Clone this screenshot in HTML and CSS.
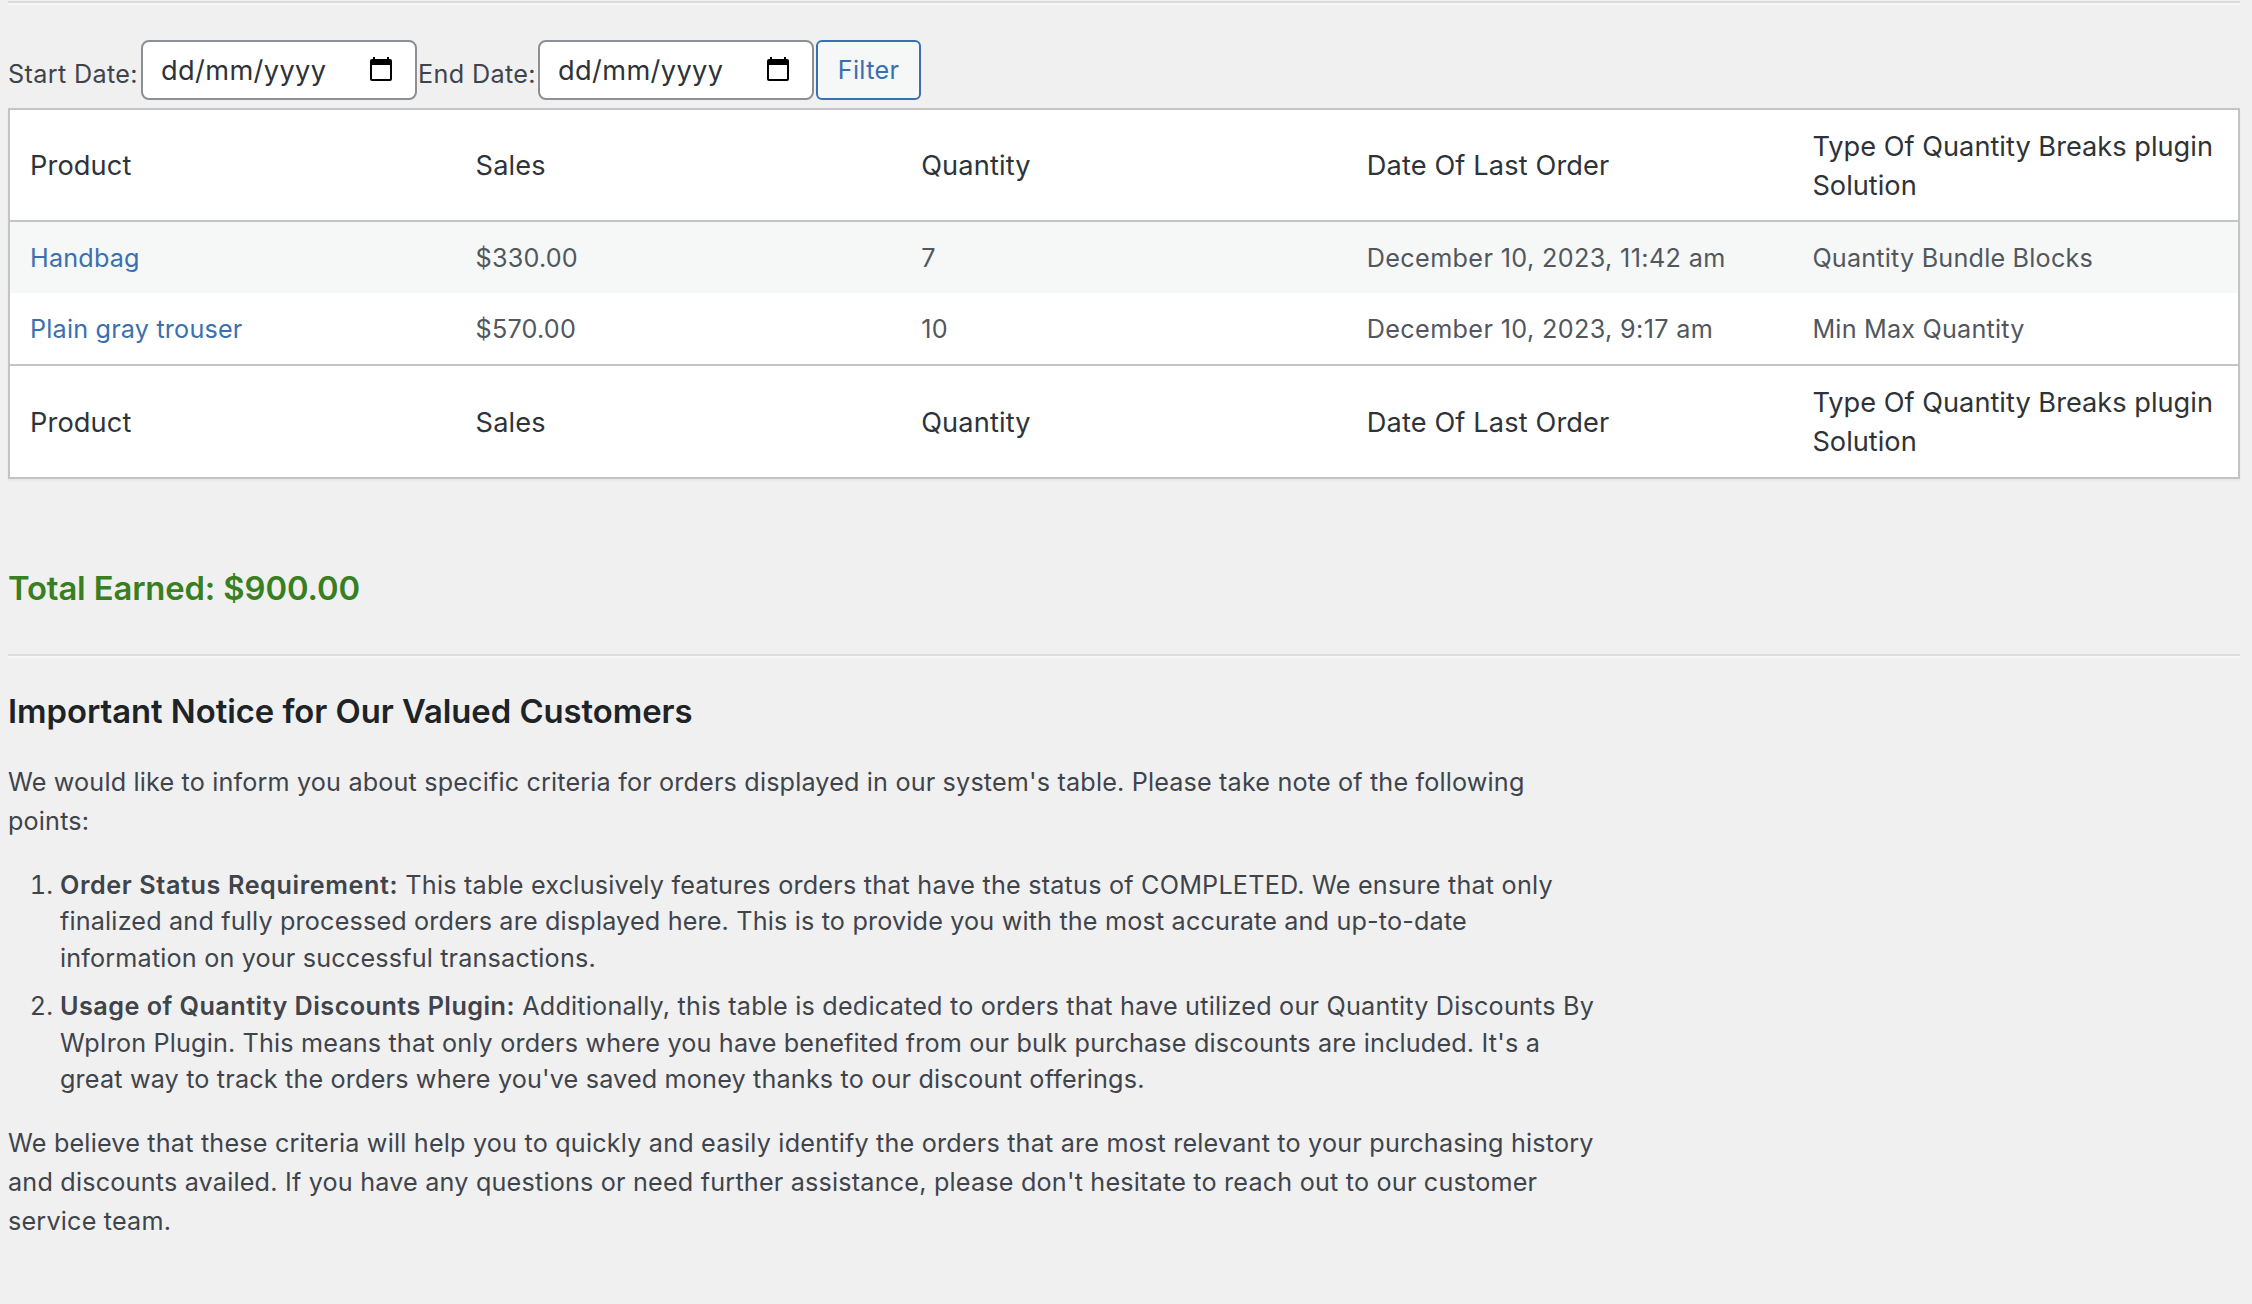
FILE: index.html
```
<!DOCTYPE html>
<html lang="en">
<head>
<meta charset="utf-8">
<title>Sales report</title>
<link rel="stylesheet" href="styles.css">
</head>
<body>
<main class="wrap">
  <hr class="rule">
  <form class="filters">
    <span class="label">Start Date:</span>
    <div class="date-field">
      <span class="date-text">dd/mm/yyyy</span>
      <svg class="calendar" width="22" height="24" viewBox="0 0 22 24"><path fill-rule="evenodd" d="M3 0h2v2h12V0h2v2h1a2 2 0 0 1 2 2v18a2 2 0 0 1-2 2H2a2 2 0 0 1-2-2V4a2 2 0 0 1 2-2h1zM2 8v14h18V8z"/></svg>
    </div>
    <span class="label label-end">End Date:</span>
    <div class="date-field">
      <span class="date-text">dd/mm/yyyy</span>
      <svg class="calendar" width="22" height="24" viewBox="0 0 22 24"><path fill-rule="evenodd" d="M3 0h2v2h12V0h2v2h1a2 2 0 0 1 2 2v18a2 2 0 0 1-2 2H2a2 2 0 0 1-2-2V4a2 2 0 0 1 2-2h1zM2 8v14h18V8z"/></svg>
    </div>
    <button class="filter-button" type="button">Filter</button>
  </form>
  <table class="report">
    <thead>
      <tr><th>Product</th><th>Sales</th><th>Quantity</th><th>Date Of Last Order</th><th class="solution">Type Of Quantity Breaks plugin<br>Solution</th></tr>
    </thead>
    <tbody>
      <tr class="striped"><td><a class="link">Handbag</a></td><td>$330.00</td><td>7</td><td class="date">December 10, 2023, 11:42 am</td><td>Quantity Bundle Blocks</td></tr>
      <tr><td><a class="link">Plain gray trouser</a></td><td>$570.00</td><td>10</td><td class="date">December 10, 2023, 9:17 am</td><td>Min Max Quantity</td></tr>
    </tbody>
    <tfoot>
      <tr><th>Product</th><th>Sales</th><th>Quantity</th><th>Date Of Last Order</th><th class="solution">Type Of Quantity Breaks plugin<br>Solution</th></tr>
    </tfoot>
  </table>
  <h2 class="total">Total Earned: $900.00</h2>
  <hr class="rule">
  <section class="notice">
    <h2 class="notice-title">Important Notice for Our Valued Customers</h2>
    <p class="intro">We would like to inform you about specific criteria for orders displayed in our system's table. Please take note of the following<br>points:</p>
    <ol class="points">
      <li><strong class="status">Order Status Requirement:</strong> <span class="lead">This table exclusively features orders that have the status of COMPLETED. We ensure that only</span><br>finalized and fully processed orders are displayed here. This is to provide you with the most accurate and up-to-date<br>information on your successful transactions.</li>
      <li><strong>Usage of Quantity Discounts Plugin:</strong> <span class="lead">Additionally, this table is dedicated to orders that have utilized our Quantity Discounts By</span><br>WpIron Plugin. This means that only orders where you have benefited from our bulk purchase discounts are included. It's a<br>great way to track the orders where you've saved money thanks to our discount offerings.</li>
    </ol>
    <p class="outro">We believe that these criteria will help you to quickly and easily identify the orders that are most relevant to your purchasing history<br>and discounts availed. If you have any questions or need further assistance, please don't hesitate to reach out to our customer<br>service team.</p>
  </section>
</main>
</body>
</html>
```
FILE: styles.css
```
* { box-sizing: border-box; }
body {
  margin: 0;
  background: #f0f0f0;
  color: #3f444b;
  font: 25.2px/39px Inter, sans-serif;
  letter-spacing: 0.165px;
}
.wrap {
  width: 2232px;
  margin-left: 8px;
  padding-top: 1px;
  white-space: nowrap;
}
.rule {
  height: 4px;
  margin: 0;
  border: 0;
  border-top: 2px solid #dcdcdd;
  border-bottom: 2px solid #f7f7f7;
}
.filters {
  display: flex;
  align-items: center;
  height: 60px;
  margin: 35px 0 8px;
}
.label {
  width: 133px;
  padding-top: 8px;
  letter-spacing: 0.34px;
}
.label-end {
  width: 121px;
  padding-left: 1px;
}
.date-field {
  display: flex;
  align-items: center;
  justify-content: space-between;
  width: 276px;
  height: 60px;
  padding: 0 23px 0 18px;
  border: 2px solid #8c8f94;
  border-radius: 8px;
  background: #fff;
  color: #2e3338;
  font-size: 27.2px;
  letter-spacing: 0.38px;
}
.calendar {
  margin-bottom: 2px;
  fill: #000;
}
.filter-button {
  width: 105px;
  height: 60px;
  margin-left: 2px;
  padding: 1px 0 0;
  border: 2px solid #3970b0;
  border-radius: 6px;
  background: #f6f7f7;
  color: #3970b0;
  font: inherit;
  letter-spacing: 0.3px;
}
.report {
  width: 100%;
  table-layout: fixed;
  border-collapse: separate;
  border-spacing: 0;
  border: 2px solid #c3c4c8;
  background: #fff;
  box-shadow: 0 2px 2px rgba(0, 0, 0, 0.04);
}
.report th {
  padding: 0 0 0 20px;
  color: #2e3338;
  font-size: 27.2px;
  font-weight: 400;
  line-height: 39px;
  letter-spacing: 0.13px;
  text-align: left;
}
.report .solution { letter-spacing: 0.01px; }
.report thead th {
  height: 112px;
  border-bottom: 2px solid #c3c4c8;
}
.report thead .solution { padding-top: 1px; }
.report tfoot th {
  height: 113px;
  padding-top: 1px;
  border-top: 2px solid #c3c4c8;
}
.report tfoot .solution { padding-top: 0; }
.report td {
  height: 71px;
  padding: 2px 0 0 20px;
  color: #52575e;
  letter-spacing: 0.2px;
}
.report .date { letter-spacing: 0.36px; }
.striped td { background: #f6f7f7; }
.report .link { color: #3970b0; letter-spacing: 0.19px; }
.total, .notice-title {
  font-size: 32.8px;
  font-weight: 600;
  line-height: 47px;
}
.total {
  margin: 86px 0 42px;
  color: #387f22;
  letter-spacing: -0.13px;
}
.notice-title {
  margin: 30px 0 28px;
  color: #1e2327;
  letter-spacing: -0.03px;
}
.intro { margin: 0 0 26px; letter-spacing: 0.16px; }
.points {
  margin: 0 0 26px;
  padding-left: 52px;
  line-height: 36.4px;
}
.points li { margin-bottom: 12px; }
.points li:last-child { margin-bottom: 0; }
.points strong { font-weight: 600; letter-spacing: 0.47px; }
.points .status { letter-spacing: 0.6px; }
.points .lead { letter-spacing: 0.205px; }
.outro { margin: 0; padding-top: 1px; letter-spacing: 0.19px; }
```
